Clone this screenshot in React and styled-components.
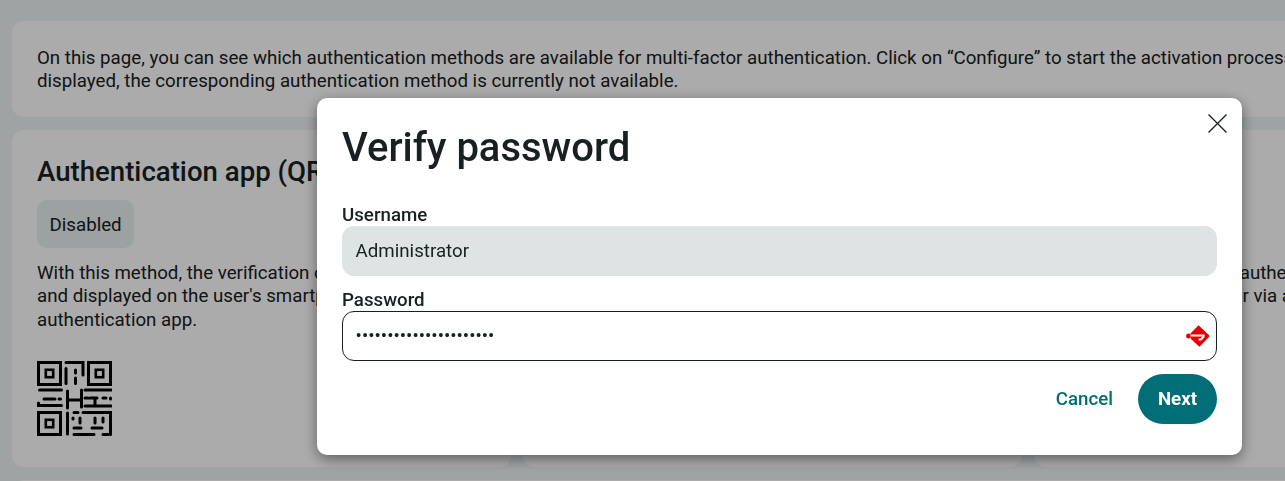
import styled, { createGlobalStyle } from "styled-components";

const GlobalStyle = createGlobalStyle`
  html, body {
    margin: 0;
    height: 100%;
    overflow: hidden;
    background: #eff4f4;
  }
  body {
    font-family: Roboto, "Liberation Sans", sans-serif;
    font-size: 18.72px;
    line-height: 23.4px;
    color: #182022;
  }
`;

const Page = styled.main`
  width: 1521px;
  height: 100vh;
  padding: 21px 12px 0;
  box-sizing: border-box;
  display: flex;
  flex-direction: column;
  gap: 13px;
  overflow: hidden;
`;

const Card = styled.section`
  flex-shrink: 0;
  background: #fff;
  border-radius: 12px;
  padding: 25.6px 25px 23.6px;
  box-sizing: border-box;
`;

const Grid = styled.div`
  flex-shrink: 0;
  display: grid;
  grid-template-columns: repeat(3, 499px);
  gap: 12px;
`;

const MethodCard = styled(Card)`
  height: 337px;
  padding-top: 26px;
  display: flex;
  flex-direction: column;
  align-items: flex-start;
`;

const Text = styled.p`
  margin: 0;
`;

const MethodTitle = styled.h2`
  margin: 0 0 12px;
  font-size: 27.6px;
  line-height: 32px;
  font-weight: 500;
`;

const Badge = styled.span`
  display: block;
  padding: 13.6px 12.5px 11px;
  background: #e9f0f0;
  border-radius: 10px;
  margin-bottom: 14px;
`;

const MethodIcon = styled.svg`
  display: block;
  flex-shrink: 0;
  width: 75px;
  height: 75px;
  margin-top: 28.8px;
`;

const Overlay = styled.div`
  position: fixed;
  inset: 0;
  background: rgba(0, 0, 0, 0.33);
  padding: 98px 0 0 317px;
`;

const Modal = styled.div`
  position: relative;
  width: 925px;
  height: 357px;
  padding: 25px;
  box-sizing: border-box;
  background: #fff;
  border-radius: 10px;
  box-shadow: 0 4px 14px rgba(0, 0, 0, 0.45);
`;

const CloseButton = styled.button`
  position: absolute;
  top: 16px;
  right: 15px;
  width: 19px;
  height: 19px;
  padding: 0;
  border: 0;
  background: none;
  color: #182022;
  display: block;

  svg {
    display: block;
  }
`;

const Title = styled.h1`
  margin: 1px 0 31px;
  font-size: 40px;
  line-height: 48px;
  font-weight: 500;
`;

const Label = styled.label`
  display: block;
  padding-top: 2px;
  font-weight: 500;
  font-size: 18.72px;
  line-height: 21px;
`;

const Field = styled.div`
  position: relative;
  margin-bottom: ${(props) => props.$gap || 0}px;
`;

const Input = styled.input`
  display: block;
  width: 100%;
  height: 50px;
  box-sizing: border-box;
  padding: 0 12.6px;
  border: 1px solid ${(props) => (props.$filled ? "#dee3e3" : "#182022")};
  border-radius: 12px;
  background: ${(props) => (props.$filled ? "#dee3e3" : "#fff")};
  font: 400 18.72px Roboto, "Liberation Sans", sans-serif;
  color: #182022;
  outline: none;
`;

const FieldIcon = styled.svg`
  position: absolute;
  top: 14px;
  right: 7px;
  width: 24px;
  height: 22px;
`;

const Actions = styled.div`
  display: flex;
  justify-content: flex-end;
  align-items: center;
  gap: 25px;
`;

const TextButton = styled.button`
  padding: 0;
  border: 0;
  background: none;
  color: #006d77;
  font: 500 18.72px Roboto, "Liberation Sans", sans-serif;
`;

const PrimaryButton = styled.button`
  width: 79px;
  height: 50px;
  padding: 0;
  border: 0;
  border-radius: 25px;
  background: #006d77;
  color: #fff;
  font: 700 18.72px Roboto, "Liberation Sans", sans-serif;
`;

const QrIcon = () => (
  <MethodIcon viewBox="0 0 75 75" fill="none" stroke="#000" strokeWidth="3" strokeLinecap="round">
    <rect x="1.5" y="1.5" width="22" height="22" />
    <rect x="8.8" y="8.8" width="7.4" height="7.4" strokeWidth="2.6" />
    <rect x="51.5" y="1.5" width="22" height="22" />
    <rect x="58.8" y="8.8" width="7.4" height="7.4" strokeWidth="2.6" />
    <rect x="1.5" y="51.5" width="22" height="22" />
    <rect x="8.8" y="58.8" width="7.4" height="7.4" strokeWidth="2.6" />
    <path d="M29 1.5h17v12.5M29 7.5v15M38.5 9v3M38.5 17v5.5" />
    <path d="M2.5 29h22M7 38h11M22 38h1.5M1.5 42v2.5h23M30.5 30v17M30.5 39h14M44.5 29v17" />
    <path d="M48 29h26M48 37h3M53 37h7M66 37h3M73.5 37v1M58 37v8M48 45h26" />
    <path d="M30.5 52v21M37 51.5h4M46 51.5h27.5v22M36 57v1M43 57v5M58 57v5M66 57v4M37 67h7M55 67h10M37 73.5h20M66 73.5h5" />
  </MethodIcon>
);

const ManagerIcon = () => (
  <FieldIcon viewBox="0 0 24 22">
    <path d="M12.6 0.3 L23 10.2 a1.2 1.2 0 0 1 0 1.7 L13.4 21.8 L5 14 L4.4 8.4 Z" fill="#e40000" />
    <circle cx="2.6" cy="11" r="2.5" fill="#e40000" />
    <path d="M4.4 10.6H17.6v1l-2.6 3h-2.4" fill="none" stroke="#fff" strokeWidth="2" />
  </FieldIcon>
);

export default function App() {
  return (
    <>
      <GlobalStyle />
      <Page>
        <Card>
          <Text>
            On this page, you can see which authentication methods are available for multi-factor
            authentication. Click on “Configure” to start the activation process. If this button is
            not displayed, the corresponding authentication method is currently not available.
          </Text>
        </Card>
        <Grid>
          <MethodCard>
            <MethodTitle>Authentication app (QR code)</MethodTitle>
            <Badge>Disabled</Badge>
            <Text>
              With this method, the verification code is generated and displayed on the user's
              smartphone via an authentication app.
            </Text>
            <QrIcon />
          </MethodCard>
          <MethodCard>
            <MethodTitle>Authentication app (TOTP)</MethodTitle>
            <Badge>Disabled</Badge>
            <Text>
              With this method, a one-time password is created on the user's smartphone and entered
              when logging in to the system.
            </Text>
          </MethodCard>
          <MethodCard>
            <MethodTitle>E-mail</MethodTitle>
            <Badge>Disabled</Badge>
            <Text>
              With this method, the authentication code is
              <br />
              displayed by the server via a secure channel.
            </Text>
          </MethodCard>
        </Grid>
        <Card />
      </Page>
      <Overlay>
        <Modal>
          <CloseButton aria-label="Close">
            <svg width="19" height="19" viewBox="0 0 19 19" fill="none" stroke="currentColor" strokeWidth="1.3">
              <path d="M0.5 0.5l18 18M18.5 0.5l-18 18" />
            </svg>
          </CloseButton>
          <Title>Verify password</Title>
          <Label htmlFor="username">Username</Label>
          <Field $gap={12}>
            <Input id="username" $filled readOnly defaultValue="Administrator" />
          </Field>
          <Label htmlFor="password">Password</Label>
          <Field $gap={13}>
            <Input id="password" type="password" readOnly defaultValue="administratorpassword1" />
            <ManagerIcon />
          </Field>
          <Actions>
            <TextButton>Cancel</TextButton>
            <PrimaryButton>Next</PrimaryButton>
          </Actions>
        </Modal>
      </Overlay>
    </>
  );
}
